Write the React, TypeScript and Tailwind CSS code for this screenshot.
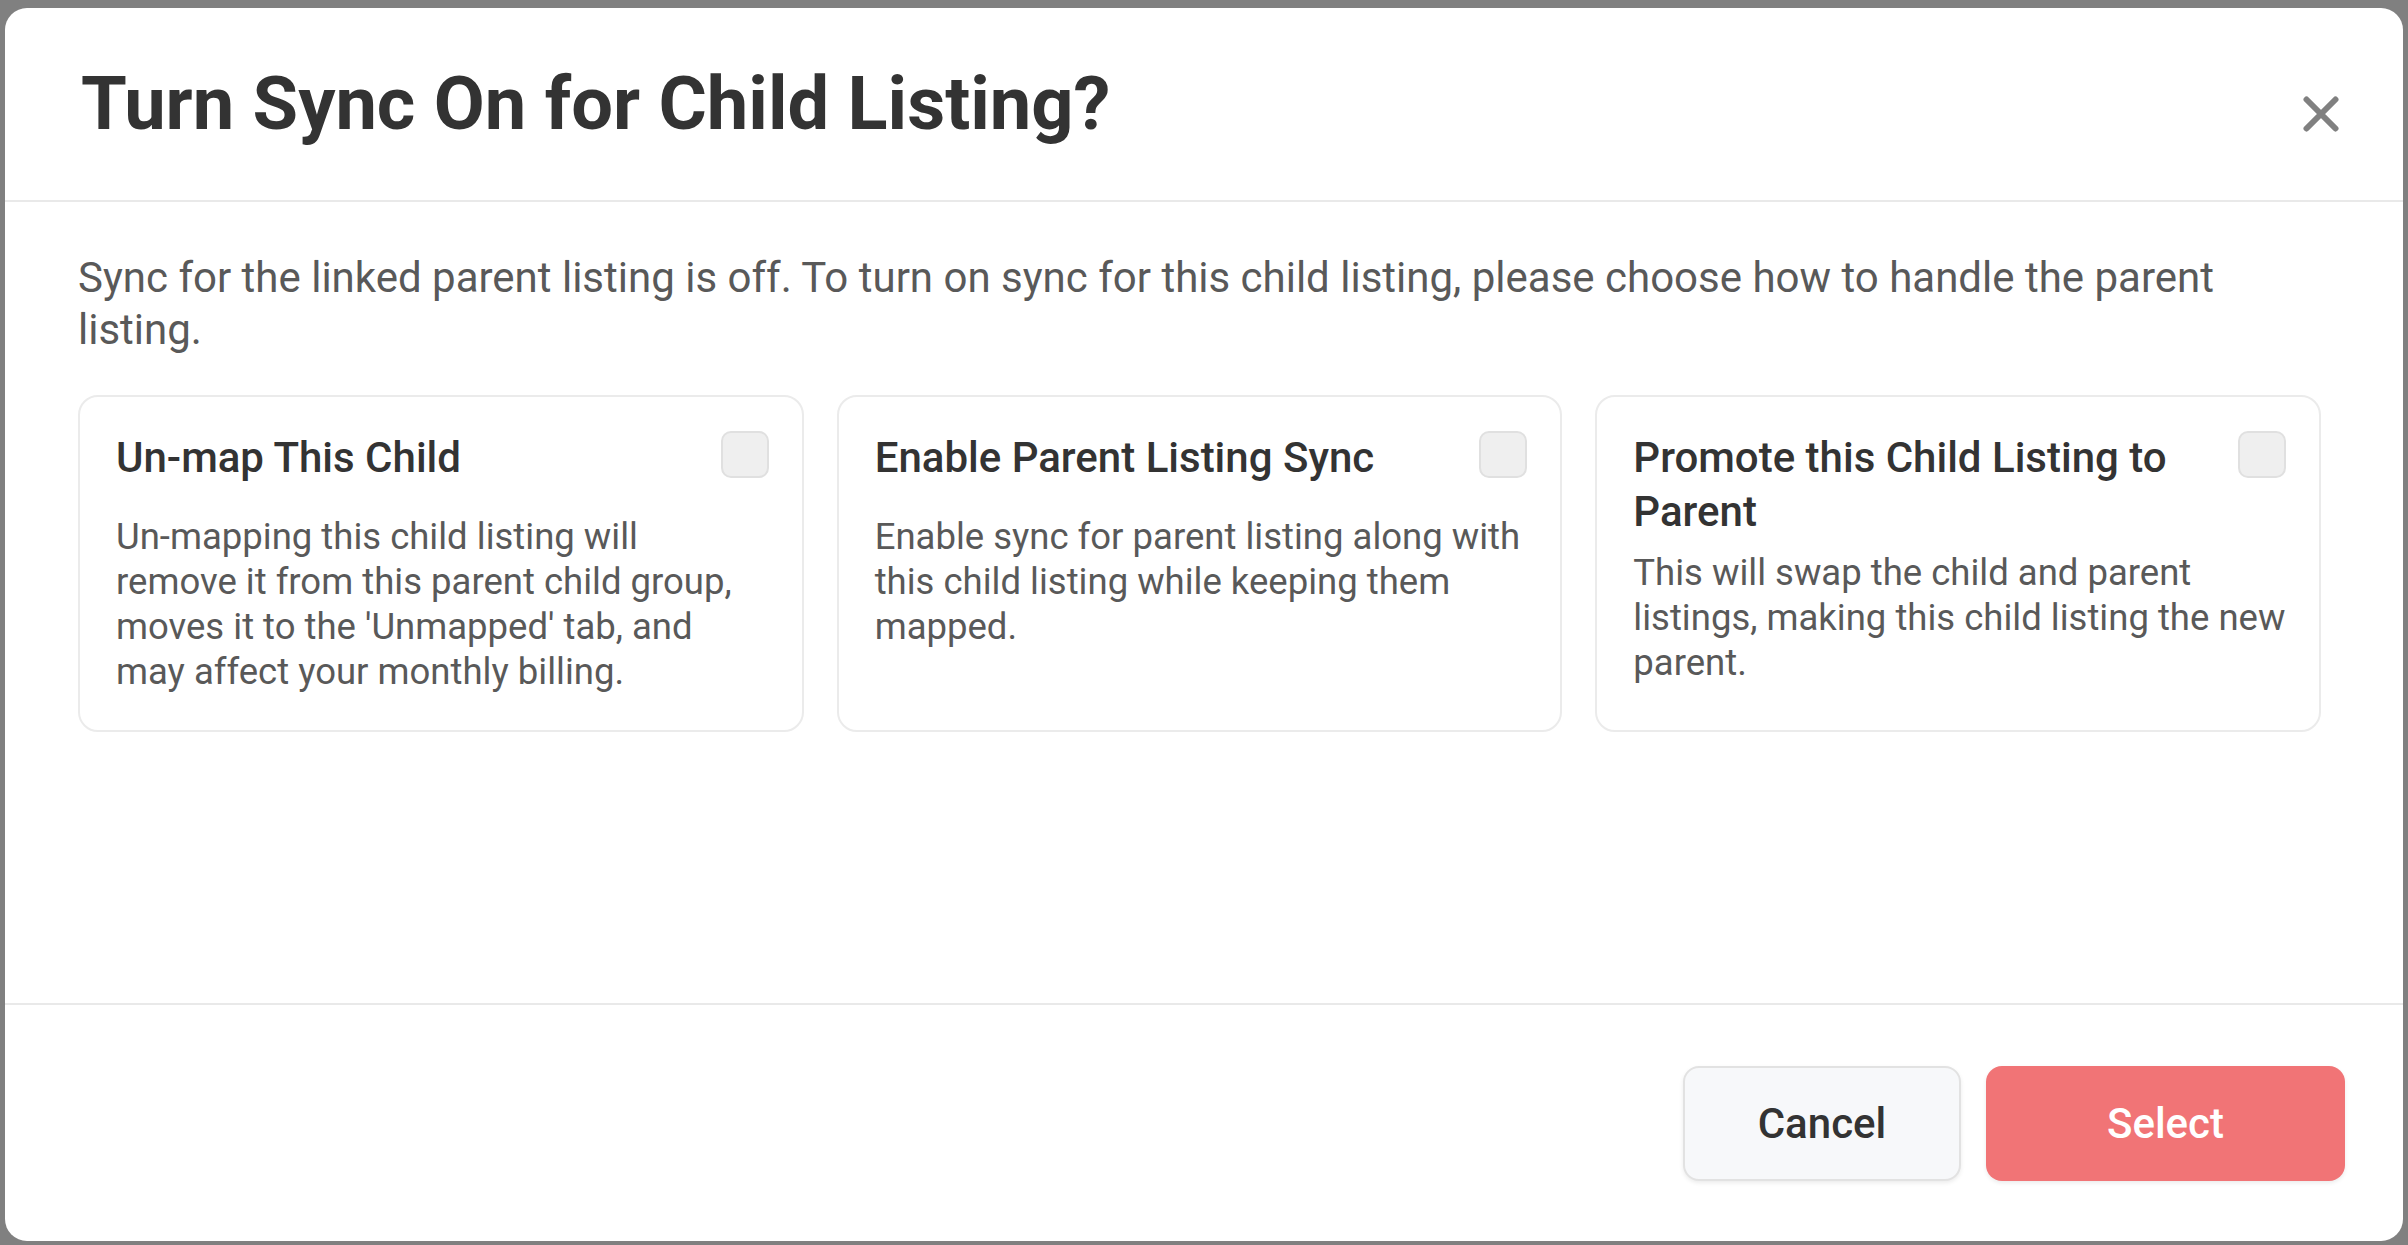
import React, { useState } from "react";

const options = [
  {
    id: "unmap",
    title: "Un-map This Child",
    text: "Un-mapping this child listing will remove\u00a0it from this parent child group, moves it to the 'Unmapped' tab, and may\u00a0affect your monthly billing.",
  },
  {
    id: "enable",
    title: "Enable Parent Listing Sync",
    text: "Enable sync for parent listing along with this child listing while keeping them mapped.",
  },
  {
    id: "promote",
    title: "Promote this Child Listing to Parent",
    text: "This will swap the child and parent listings, making this child listing the new parent.",
  },
];

function CloseIcon() {
  return (
    <svg width="36" height="36" viewBox="0 0 36 36" fill="none">
      <path d="M3.5 3.5 L32.5 32.5 M32.5 3.5 L3.5 32.5" stroke="#808080" strokeWidth="6" strokeLinecap="round" />
    </svg>
  );
}

export default function App() {
  const [selected, setSelected] = useState("");

  return (
    <div className="min-h-screen bg-[#808080] px-[5px] pt-[8px] pb-[4px] font-['Roboto',sans-serif]">
      <div className="flex h-[1233px] w-[2398px] flex-col overflow-hidden rounded-[22px] bg-white">
        {/* header */}
        <div className="flex h-[194px] shrink-0 items-center justify-between border-b-2 border-[#e9e9e9] pl-[76px] pr-[64px]">
          <h1 className="text-[74px] font-bold leading-[88px] text-[#333333]">
            Turn Sync On for Child Listing?
          </h1>
          <button className="mt-[20px]">
            <CloseIcon />
          </button>
        </div>

        {/* body */}
        <div className="flex-1 pl-[73px] pr-[82px] pt-[50px]">
          <p className="text-[42px] leading-[52px] text-[#595959]">
            Sync for the linked parent listing is off. To turn on sync for this child listing, please choose how to handle the parent listing.
          </p>
          <div className="mt-[39px] grid grid-cols-3 gap-[33px]">
            {options.map((o) => (
              <div
                key={o.id}
                onClick={() => setSelected(o.id)}
                className="rounded-[20px] border-2 border-[#ebebeb] pb-[36px] pl-[36px] pr-[33px] pt-[34px]"
              >
                <div className="flex min-h-[72px] items-start justify-between gap-[30px]">
                  <h3 className="text-[42px] font-medium leading-[54px] text-[#333333]">{o.title}</h3>
                  <div
                    className={
                      selected === o.id
                        ? "h-[47px] w-[48px] shrink-0 rounded-[10px] border-2 border-[#f17476] bg-[#f17476]"
                        : "h-[47px] w-[48px] shrink-0 rounded-[10px] border-2 border-[#e0e0e0] bg-[#efefef]"
                    }
                  />
                </div>
                <p className="mt-[11px] text-[36.5px] leading-[45px] text-[#595959]">{o.text}</p>
              </div>
            ))}
          </div>
        </div>

        {/* footer */}
        <div className="flex h-[238px] shrink-0 items-center justify-end gap-[25px] border-t-2 border-[#e9e9e9] pr-[58px]">
          <button className="h-[115px] w-[278px] rounded-[16px] border-2 border-[#e2e2e2] bg-[#f7f8fa] text-[42px] font-medium text-[#333333] shadow-[0_2px_4px_rgba(0,0,0,0.08)]">
            Cancel
          </button>
          <button className="h-[115px] w-[359px] rounded-[16px] bg-[#f17476] text-[42px] font-medium text-white shadow-[0_2px_4px_rgba(0,0,0,0.08)]">
            Select
          </button>
        </div>
      </div>
    </div>
  );
}
